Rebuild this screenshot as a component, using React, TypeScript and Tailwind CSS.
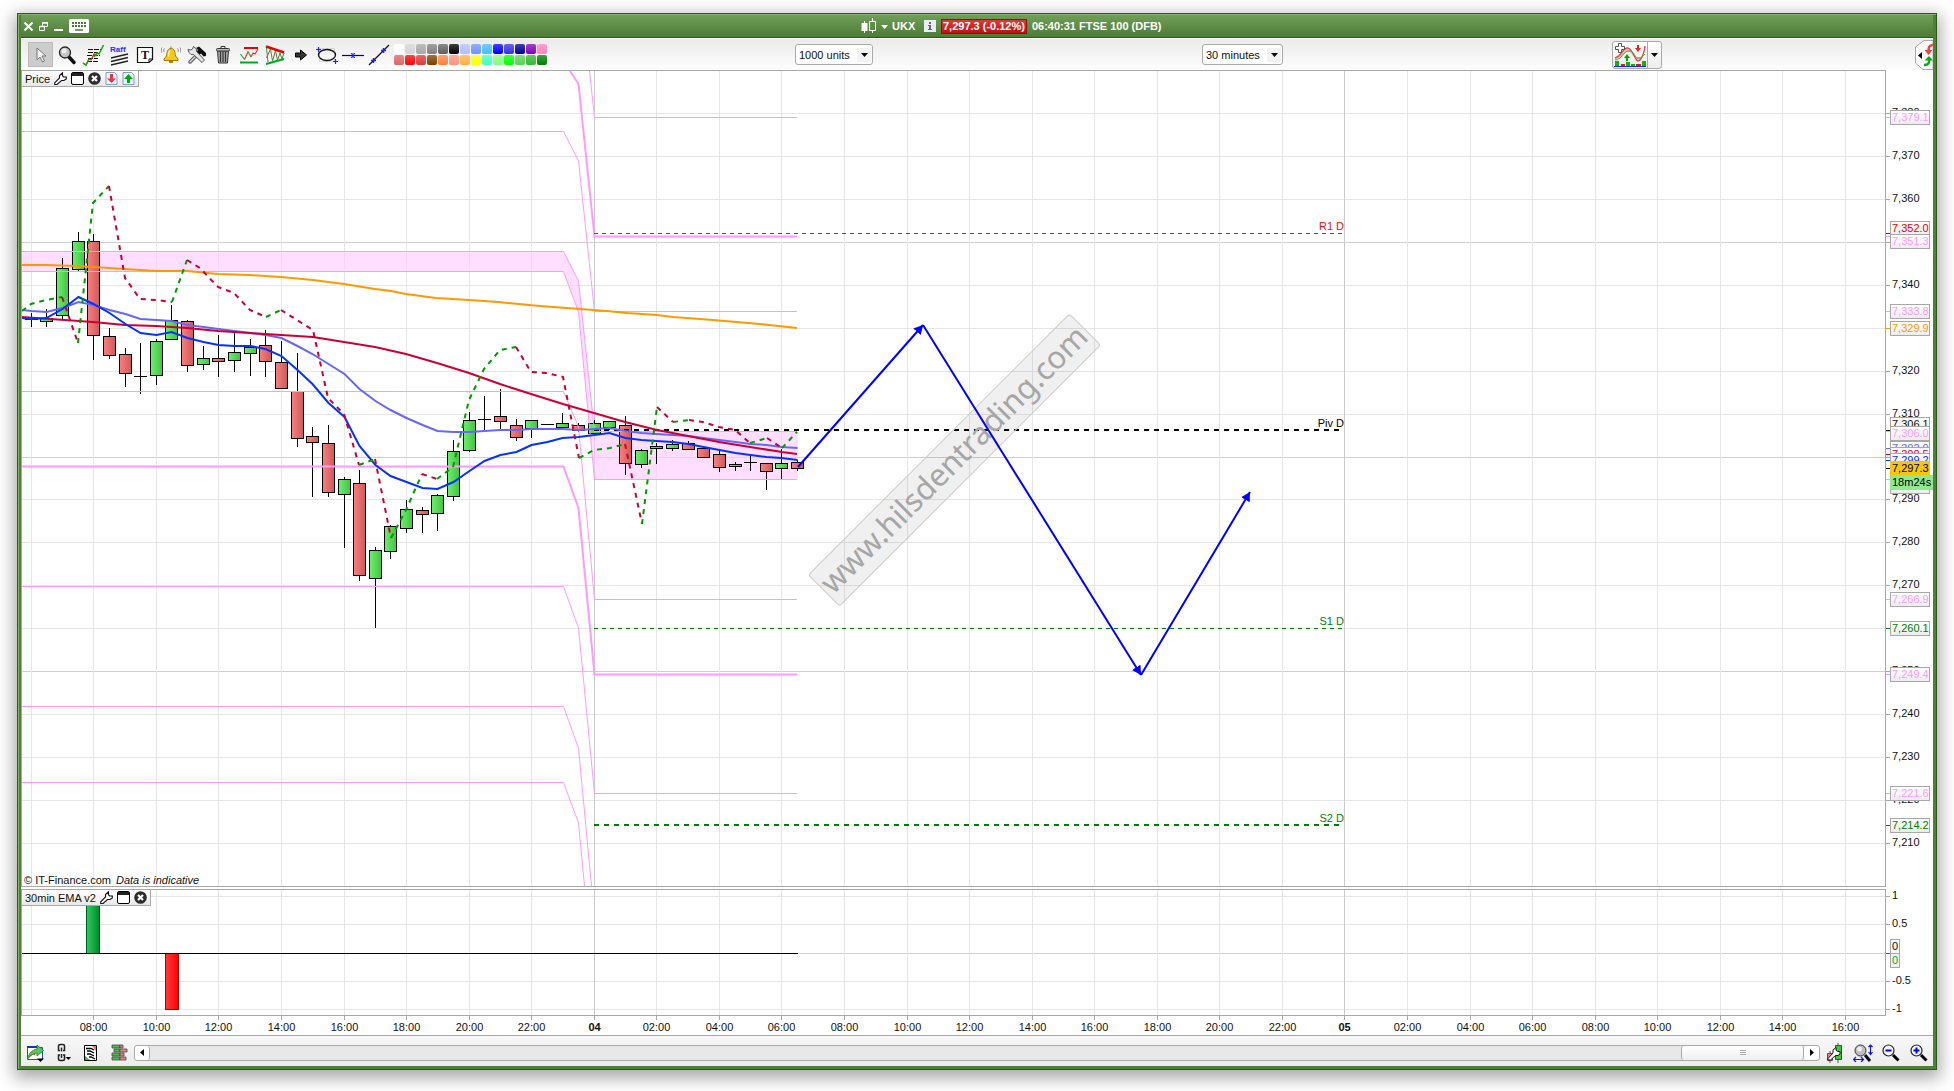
import type { ReactNode } from 'react';

const GRAY = '#a8a8a8';
const PINK = '#ff99ff';
const UP = '#009900';
const DOWN = '#cc0033';

// one bar every 30 minutes, bar 0 is 08:00
const xAt = (bar: number) => Math.floor(93.79 + bar * 15.64) + 0.5;
const yAt = (price: number) => Math.floor(113.5 + (7380 - price) * 4.294) + 0.5;

const prices = Array.from({ length: 18 }, (_, i) => 7380 - i * 10);
const hourBars = Array.from({ length: 30 }, (_, i) => -4 + i * 4);

// these levels lie wholly under a price tag
const coveredPrices = [7350, 7330, 7300, 7260];

const timeLabel = (bar: number) => {
  if (bar === 32) return '04';
  if (bar === 80) return '05';
  const hour = (8 + bar / 2) % 24;
  return `${String(hour).padStart(2, '0')}:00`;
};

// bar, high, low, body top, body bottom, u = up, d = down, x = doji
type Candle = [number, number, number, number, number, 'u' | 'd' | 'x'];

const candles: Candle[] = [
  [-4, 313, 327, 319, 319, 'x'],
  [-3, 309, 327, 318, 321, 'u'],
  [-2, 258, 319, 268, 315, 'u'],
  [-1, 232, 271, 241, 269, 'u'],
  [0, 234, 360, 241, 335, 'd'],
  [1, 328, 359, 336, 355, 'd'],
  [2, 348, 387, 354, 373, 'd'],
  [3, 343, 394, 376, 376, 'x'],
  [4, 339, 385, 341, 375, 'u'],
  [5, 305, 340, 320, 339, 'u'],
  [6, 320, 372, 321, 365, 'd'],
  [7, 346, 370, 358, 364, 'u'],
  [8, 335, 377, 358, 361, 'd'],
  [9, 333, 372, 352, 360, 'u'],
  [10, 339, 376, 347, 353, 'u'],
  [11, 330, 377, 345, 361, 'd'],
  [12, 341, 389, 362, 388, 'd'],
  [13, 353, 447, 391, 438, 'd'],
  [14, 427, 497, 436, 442, 'd'],
  [15, 425, 497, 443, 492, 'd'],
  [16, 477, 548, 479, 494, 'u'],
  [17, 470, 581, 483, 575, 'd'],
  [18, 547, 628, 550, 578, 'u'],
  [19, 525, 559, 526, 551, 'u'],
  [20, 500, 533, 509, 528, 'u'],
  [21, 507, 533, 510, 514, 'd'],
  [22, 494, 531, 495, 513, 'u'],
  [23, 440, 501, 451, 496, 'u'],
  [24, 412, 452, 420, 450, 'u'],
  [25, 396, 432, 419, 419, 'x'],
  [26, 389, 429, 416, 421, 'd'],
  [27, 419, 441, 425, 437, 'd'],
  [28, 420, 438, 420, 428, 'u'],
  [29, 424, 425, 424, 424, 'x'],
  [30, 413, 430, 423, 427, 'u'],
  [31, 423, 432, 425, 430, 'd'],
  [32, 420, 434, 423, 433, 'u'],
  [33, 421, 430, 421, 427, 'u'],
  [34, 416, 475, 425, 463, 'd'],
  [35, 449, 468, 450, 464, 'u'],
  [36, 443, 464, 446, 448, 'u'],
  [37, 440, 451, 444, 448, 'u'],
  [38, 441, 450, 443, 449, 'd'],
  [39, 447, 458, 448, 457, 'd'],
  [40, 449, 472, 454, 467, 'd'],
  [41, 462, 471, 464, 466, 'u'],
  [42, 455, 471, 462, 462, 'x'],
  [43, 463, 490, 463, 471, 'd'],
  [44, 449, 479, 463, 468, 'u'],
  [45, 460, 471, 462, 468, 'd'],
];

const fastAverage = [
  319, 318, 309, 297, 304, 313, 324, 333, 335, 332, 338, 342, 345, 346, 346, 349, 356, 370, 384, 403, 417, 446, 465,
  476, 482, 488, 489, 482, 471, 461, 455, 452, 445, 442, 438, 437, 435, 433, 438, 440, 441, 442, 444, 447, 450, 453,
  455, 457, 458, 460,
];
const mediumAverage = [
  311, 312, 308, 302, 305, 310, 314, 319, 320, 321, 325, 327, 329, 331, 333, 335, 338, 346, 354, 364, 374, 389, 401,
  410, 418, 425, 431, 432, 432, 431, 430, 430, 429, 429, 429, 430, 429, 428, 431, 433, 434, 435, 436, 438, 440, 442,
  444, 445, 447, 448,
];
const barLine = (start: number, values: number[]) =>
  [`21,${start}`, ...values.map((y, i) => `${xAt(i - 4)},${y}`)].join(' ');

const slowAverage =
  '21,317 93,322 125,325 156,326 187,328 218,331 250,333 281,335 313,337 344,342 375,347 406,354 437,363 469,373 500,384 531,394 563,404 594,413 625,422 657,430 688,436 719,442 750,447 782,452 797,454';
const longAverage =
  '21,265 46,265 78,266 93,267 109,268 140,270 156,271 187,271 218,274 250,275 281,277 313,280 344,284 375,289 391,291 406,294 436,298 469,300 498,302 540,306 580,309 607,311 627,313 657,315 673,317 713,320 760,324 797,328';

const trail: [string, string][] = [
  [UP, '22,311 31,304 46,300 62,297'],
  [DOWN, '62,297 78,343'],
  [UP, '78,343 93,203 109,186'],
  [DOWN, '109,186 125,278 140,299 156,300 172,302'],
  [UP, '172,302 187,260'],
  [DOWN, '187,260 200,268 218,287 234,293 250,310 266,317'],
  [UP, '266,317 281,310'],
  [DOWN, '281,310 297,320 313,330 328,398 344,414 359,465'],
  [UP, '359,465 375,459'],
  [DOWN, '375,459 391,538'],
  [UP, '391,538 406,510 422,474'],
  [DOWN, '422,474 437,479'],
  [UP, '437,479 453,467 469,400 484,369 500,350 516,347'],
  [DOWN, '516,347 531,372 547,373 563,377 579,458'],
  [UP, '579,458 594,450 610,448 625,444'],
  [DOWN, '625,444 642,524'],
  [UP, '642,524 657,407'],
  [DOWN, '657,407 673,422'],
  [UP, '673,422 689,420'],
  [DOWN, '689,420 703,422 719,427 735,430 750,443'],
  [UP, '750,443 767,438'],
  [DOWN, '767,438 782,448'],
  [UP, '782,448 797,432'],
];

const bands: [string, number][] = [
  ['570,71 578.5,84 594.5,236.5 797,236.5', 2],
  ['589.5,71 594.5,117.5 797,117.5', 1],
  ['21,131.5 563.5,131.5 578.5,161 594.5,311.5 797,311.5', 1],
  ['21,251.5 563.5,251.5 578.5,281 594.5,431.5 797,431.5', 1],
  ['21,271.5 563.5,271.5 578.5,312 594.5,479.5 797,479.5', 1],
  ['21,391.5 563.5,391.5 578.5,427 594.5,599.5 797,599.5', 1],
  ['21,466.5 563.5,466.5 578.5,508 594.5,674.5 797,674.5', 2],
  ['21,586.5 563.5,586.5 578.5,628 594.5,793.5 797,793.5', 1],
  ['21,706.5 563.5,706.5 578.5,748 591.5,886', 1],
  ['21,782.5 563.5,782.5 578.5,823 584.5,886', 1],
];

const pivots = [
  { label: 'R1 D', y: 233.5, color: '#dd1111', width: 1, dash: '4 4', text: '#ee1111' },
  { label: 'Piv D', y: 430, color: '#000000', width: 2, dash: '5 5', text: '#000000' },
  { label: 'S1 D', y: 628.5, color: '#008000', width: 1, dash: '4 4', text: '#008000' },
  { label: 'S2 D', y: 825, color: '#008000', width: 2, dash: '5 5', text: '#008000' },
];

const tags = [
  { text: '7,379.1', y: 110, tick: 117.5, color: PINK },
  { text: '7,352.0', y: 221, tick: 233.5, color: '#ee0000' },
  { text: '7,351.3', y: 234, tick: 236.5, color: PINK },
  { text: '7,333.8', y: 304, tick: 311.5, color: PINK },
  { text: '7,329.9', y: 321, tick: 328.5, color: '#ff9900' },
  { text: '7,306.1', y: 417, tick: 430.5, color: '#111111' },
  { text: '7,306.0', y: 426, tick: 431.5, color: PINK },
  { text: '7,302.0', y: 441, tick: 448.5, color: '#6666ff' },
  { text: '7,300.5', y: 447, tick: 454.5, color: DOWN },
  { text: '7,299.2', y: 453, tick: 460.5, color: '#0433ff' },
  { text: '', y: 479, tick: 479.5, color: PINK },
  { text: '7,266.9', y: 592, tick: 599.5, color: PINK },
  { text: '7,260.1', y: 621, tick: 628.5, color: '#008000' },
  { text: '7,249.4', y: 667, tick: 674.5, color: PINK },
  { text: '7,221.6', y: 786, tick: 793.5, color: PINK },
  { text: '7,214.2', y: 818, tick: 825.5, color: '#008000' },
];

const palette = [
  ['#ffffff', '#d4d4d4', '#a8a8a8', '#808080', '#606060', '#000000', '#b4bcff', '#6f92ff', '#40bfff', '#0000ff', '#3333dd', '#000099', '#8800bb', '#ff80c0'],
  ['#dd6666', '#ff0000', '#e03838', '#804000', '#ff8040', '#ff9080', '#ffb040', '#ffff00', '#40ffc0', '#80ff80', '#00ff00', '#50d850', '#30b830', '#008000'],
];

const lowerLevels = [
  { label: '1', y: 896.5 },
  { label: '0.5', y: 924.5 },
  { label: '', y: 953.5 },
  { label: '-0.5', y: 981.5 },
  { label: '-1', y: 1009.5 },
];

function Glyph({ w = 20, h = 20, children }: { w?: number; h?: number; children: ReactNode }) {
  return (
    <svg width={w} height={h} viewBox={`0 0 ${w} ${h}`} fill="none" aria-hidden="true">
      {children}
    </svg>
  );
}

const Wrench = () => (
  <Glyph w={13} h={13}>
    <path d="M.7 10.800 5.500 6V3.500L8.500.8v3l1.200 1.200h2.600v2L10 8.500H7.500L3 12.500H.7z" fill="#fff" stroke="#111" strokeWidth="1.100" />
  </Glyph>
);

const Maximise = () => (
  <Glyph w={13} h={13}>
    <rect x="0.500" y="0.500" width="12" height="12" rx="1.500" fill="#fff" stroke="#000" />
    <path d="M1 1h11v3H1z" fill="#222" />
  </Glyph>
);

const Close = () => (
  <Glyph w={13} h={13}>
    <circle cx="6.500" cy="6.500" r="6.300" fill="#2d2d2d" />
    <path d="m4 4 5 5M9 4 4 9" stroke="#fff" strokeWidth="2.200" />
  </Glyph>
);

const SheetArrow = ({ up }: { up?: boolean }) => (
  <Glyph w={13} h={13}>
    <path d="M1 .5h8.500L12 3v9.500H1z" fill="#eef4fc" stroke="#7f9fc4" />
    {up ? (
      <path d="M6.500 2 11 7H8v4H5V7H2z" fill="#00aa11" />
    ) : (
      <path d="M6.500 11 11 6.500H8V2H5v4.500H2z" fill="#ee3344" />
    )}
  </Glyph>
);

const tools: { name: string; icon: ReactNode }[] = [
  {
    name: 'Select',
    icon: (
      <Glyph>
        <path d="M6 3v12l3-3 2.500 5 2-1-2.500-5h4z" fill="#f4f4f4" stroke="#777" />
      </Glyph>
    ),
  },
  {
    name: 'Zoom',
    icon: (
      <Glyph>
        <path d="m12 12 5 5.500" stroke="#111" strokeWidth="3.500" strokeLinecap="round" />
        <circle cx="8" cy="7.500" r="5.500" fill="#c4c4c4" stroke="#222" strokeWidth="1.300" />
        <circle cx="7" cy="6" r="2.500" fill="#eee" />
      </Glyph>
    ),
  },
  {
    name: 'Order levels',
    icon: (
      <Glyph w={22} h={22}>
        <path d="M6 5.500h13M6 8.500h10M5 11.500h13M6 14.500h10M5 17.500h11" stroke="#111" strokeDasharray="5 1" />
        <path d="m1 19 3 2 3-6 2 1 3-6 3 2" stroke="#e22" strokeWidth="1.200" />
        <path d="m1 19 3 2 3-6M12 13l3-4 2 1 4.500-9" stroke="#1a1" strokeWidth="1.500" />
      </Glyph>
    ),
  },
  {
    name: 'Raff channel',
    icon: (
      <Glyph w={20} h={22}>
        <text x="1" y="8" fontSize="8" fontFamily="Liberation Sans, sans-serif" fontWeight="bold" fill="#2233ff">
          Raff
        </text>
        <path d="m2 14 17-4M2 17.500l17-4M2 21l17-4" stroke="#222" strokeWidth="1.300" />
      </Glyph>
    ),
  },
  {
    name: 'Text',
    icon: (
      <Glyph>
        <path d="M2.500 2.500h15v12L14 17.500H2.500z" fill="#fff" stroke="#111" strokeWidth="1.200" />
        <path d="M14 17.500v-3.500h3.500" stroke="#111" />
        <text x="10" y="14" fontSize="12" textAnchor="middle" fontFamily="Liberation Serif, serif" fontWeight="bold" fill="#111">
          T
        </text>
      </Glyph>
    ),
  },
  {
    name: 'Alert',
    icon: (
      <Glyph>
        <path d="M10 3.500c-4 0-4 4.500-4.500 7.500L3 14v1.500h14V14l-2.500-3C14 8 14 3.500 10 3.500z" fill="#f7c81c" stroke="#a77b00" />
        <path d="M10 1.500v2M8.500 16h3v1.500h-3z" fill="#d09a00" stroke="#a77b00" />
        <path d="M8.500 5.500c-1 2-1 4-1 6" stroke="#fff3a0" strokeWidth="1.500" />
        <path d="M3.500 3.500C2.500 4.500 2.500 6 3 7M1 2.500C0 4 0 6 .5 7.500M16.500 3.500c1 1 1 2.500.5 3.500M19 2.500c1 1.500 1 3.500.5 5" stroke="#888" />
      </Glyph>
    ),
  },
  {
    name: 'Tools',
    icon: (
      <Glyph>
        <path d="m3 17 8-8" stroke="#555" strokeWidth="3.500" strokeLinecap="round" />
        <path d="m3 17 8-8" stroke="#ddd" strokeWidth="1.500" strokeLinecap="round" />
        <path d="m9 3 3-1.500 7 6.500v3l-2.500.5-2.500-3-2 2-3-3 2-2.500z" fill="#111" />
        <path d="m6.500 9.500 8.500 8 2.500-2.500-8-8.500V4L6.500 1.500 5.500 4 3.500 5 1 4.500 2 7.500l2 2z" fill="#e5e5e5" stroke="#555" />
      </Glyph>
    ),
  },
  {
    name: 'Delete',
    icon: (
      <Glyph>
        <path d="M4.500 6h11l-1 12h-9z" fill="#aaa" stroke="#333" />
        <path d="M7.500 7v10M10 7v10M12.500 7v10" stroke="#333" strokeWidth="1.200" />
        <rect x="3.500" y="3.500" width="13" height="2.500" rx="1" fill="#bbb" stroke="#333" />
        <path d="M8 3V1.500h4V3" stroke="#333" />
      </Glyph>
    ),
  },
  {
    name: 'Support and resistance',
    icon: (
      <Glyph>
        <path d="M5 3h14" stroke="#f00000" strokeWidth="2" />
        <path d="M1 17.500h18" stroke="#00aa22" strokeWidth="2" />
        <path d="m1.500 9 4 5.500M9 6.500l3 5.500" stroke="#1a4" strokeWidth="1.200" />
        <path d="m5.500 14.500 3.500-8M12 12l2-4 2 1 3-5" stroke="#e33" strokeWidth="1.200" />
      </Glyph>
    ),
  },
  {
    name: 'Trend channel',
    icon: (
      <Glyph>
        <path d="m1 1.500 18 6" stroke="#f00000" strokeWidth="2.500" />
        <path d="m1 19 18-5" stroke="#00aa22" strokeWidth="2" />
        <path d="m1.500 13 4-9M7.500 16l3-10M12.500 15l2.500-7" stroke="#d33" />
        <path d="m1.500 3 1.500 14M5.500 4l2 12M10.500 6l2 9M15 8l2 6 2-6" stroke="#1a4" />
      </Glyph>
    ),
  },
  {
    name: 'Arrow',
    icon: (
      <Glyph>
        <path d="M4.500 8h5V5l6 5-6 5v-3h-5z" fill="#333" stroke="#000" />
      </Glyph>
    ),
  },
  {
    name: 'Ellipse',
    icon: (
      <Glyph w={22}>
        <rect x="3.500" y="3.500" width="15" height="13" stroke="#bbb" strokeDasharray="1 1" />
        <ellipse cx="11" cy="10" rx="8.500" ry="5.500" stroke="#111" strokeWidth="1.300" />
        <path d="M0 4.500h5M2.500 2v5M17 16.500h5M19.500 14v5" stroke="#2222ee" strokeWidth="1.200" />
      </Glyph>
    ),
  },
  {
    name: 'Horizontal line',
    icon: (
      <Glyph w={22}>
        <path d="M0 10.500h22" stroke="#111" strokeWidth="1.200" />
        <path d="m9 8 4 5M13 8l-4 5M11 8v5" stroke="#22e" />
      </Glyph>
    ),
  },
  {
    name: 'Trend line',
    icon: (
      <Glyph w={22} h={22}>
        <path d="M1 21 21 1" stroke="#111" strokeWidth="1.200" />
        <path d="M3 16.500h5M5.500 14v5M13 6.500h5M15.500 4v5" stroke="#22e" strokeWidth="1.500" />
      </Glyph>
    ),
  },
];

function TitleBar() {
  return (
    <header className="grid h-[23px] shrink-0 grid-cols-[840fr_1072fr] items-center border-b border-[#2c5a1a] bg-linear-to-b from-[#6f9f58] to-[#4c7c35] text-white">
      <div className="flex items-center gap-[6px] pl-[3px]">
        <button aria-label="Close window">
          <Glyph w={9} h={9}>
            <path d="m.5.5 8 8M8.500.5l-8 8" stroke="#fff" strokeWidth="2" />
          </Glyph>
        </button>
        <button aria-label="Restore window">
          <Glyph w={9} h={9}>
            <path d="M3.500.5h5v4h-5zM.5 4.500h5v4h-5z" stroke="#fff" />
            <path d="M3 1h6M0 4.500h6" stroke="#fff" strokeWidth="1.500" />
          </Glyph>
        </button>
        <button aria-label="Minimise window">
          <Glyph w={9} h={9}>
            <path d="M0 8h9" stroke="#fff" strokeWidth="2" />
          </Glyph>
        </button>
        <button aria-label="Keyboard">
          <Glyph w={20} h={14}>
            <rect width="20" height="14" rx="1.500" fill="#fff" />
            <path d="M3 4h14M3 7h14" stroke="#4b7a35" strokeWidth="2" strokeDasharray="2 1" />
            <path d="M6 11h8" stroke="#4b7a35" strokeWidth="1.500" />
          </Glyph>
        </button>
      </div>
      <div className="flex items-center text-[11px] font-bold leading-3 whitespace-nowrap">
        <button aria-label="Choose instrument" className="mr-1 flex items-center">
          <Glyph w={27} h={16}>
            <path d="M3.500 3v12M11.500 0v3M11.500 13v2" stroke="#fff" />
            <path d="M.5 5h6v8h-6z" fill="#fff" />
            <path d="M8.500 3.500h6v9h-6z" stroke="#fff" />
            <path d="M20 7h7l-3.500 4z" fill="#fff" />
          </Glyph>
        </button>
        <span className="w-8">UKX</span>
        <button aria-label="Instrument details" className="mr-[5px]">
          <Glyph w={12} h={12}>
            <path d="M0 0h12v12H0z" fill="#e9edf5" />
            <path d="M5 2h2v2H5zM4 5h3v4h1v1H4V9h1V6H4z" fill="#667" />
          </Glyph>
        </button>
        <span className="border border-[#8e1111] bg-linear-to-b from-[#e23838] to-[#bb1111] px-px leading-[13px]">7,297.3 (-0.12%)</span>
        <span className="ml-[5px]">06:40:31 FTSE 100 (DFB)</span>
      </div>
    </header>
  );
}

function Picker({ label, options, width }: { label: string; options: string[]; width: string }) {
  return (
    <div className={`relative ${width}`}>
      <select
        aria-label={label}
        className="block h-[21px] w-full appearance-none rounded-[3px] border border-[#aaa] bg-white pl-[3px] text-[11px] leading-4 text-[#111]"
      >
        {options.map((option) => (
          <option key={option}>{option}</option>
        ))}
      </select>
      <span className="pointer-events-none absolute top-1 right-[2px] flex h-[14px] w-[14px] items-center justify-center bg-[#f2f2f2]">
        <Glyph w={7} h={4}>
          <path d="M0 0h7L3.500 4z" fill="#000" />
        </Glyph>
      </span>
    </div>
  );
}

function Toolbar() {
  return (
    <div className="grid h-8 shrink-0 grid-cols-[774fr_407fr_410fr_321fr] items-center border-t border-white bg-linear-to-b from-[#ebebeb] to-[#fdfdfd]">
      <div className="flex items-center gap-[3px] pl-[7px]">
        <div className="flex shrink-0 gap-px">
          {tools.map((tool, i) => (
            <button
              key={tool.name}
              aria-label={tool.name}
              className={`flex h-[25px] w-[25px] items-center justify-center ${i === 0 ? 'border border-[#bbb] bg-[#cccccc]' : ''}`}
            >
              {tool.icon}
            </button>
          ))}
        </div>
        <div className="flex shrink-0 flex-col gap-px">
          {palette.map((row, r) => (
            <div key={r} className="flex gap-px">
              {row.map((color) => (
                <button
                  key={color}
                  aria-label={`Colour ${color}`}
                  className="h-[10px] w-[10px] rounded-[2px] bg-linear-to-b from-white/25 to-transparent"
                  style={{ backgroundColor: color }}
                />
              ))}
            </div>
          ))}
        </div>
      </div>
      <Picker label="Number of units" options={['1000 units', '2000 units']} width="w-[78px]" />
      <Picker label="Time frame" options={['30 minutes', '1 hour']} width="w-[81px]" />
      <div className="flex items-center justify-between">
        <div className="flex h-7 w-[50px] rounded-[3px] border border-[#aaa] bg-linear-to-b from-white to-[#ededed]">
          <button aria-label="Indicators" className="flex flex-1 items-center justify-center">
            <Glyph w={32} h={24}>
              <path d="M1 15C8 13 9 4 14 5s7 13 10 13 6-7 7-15c0 10-4 12-8 12s-6-7-9-7-6 9-13 8z" fill="#f0b8b0" />
              <path d="M1 15C8 13 9 4 14 5s7 13 10 13 6-7 7-15" stroke="#e33" strokeWidth="1.200" />
              <path d="M1 17c7 0 8-9 14-9s5 7 9 7 5-2 7-4" stroke="#3a4" />
              <path d="M1 23v-5h4v5zM12 23v-4h4v4zM17 23v-2h4v2zM28 23v-5h4v5z" fill="#0b0" />
              <path d="M7 23v-2h4v2zM22 23v-2h5v2z" fill="#c22" />
              <path d="M0 23.500h32" stroke="#22e" />
              <path d="m13 11 3 4h-2v3h-2v-3h-2z" fill="#0a0" />
              <path d="m24 9 3-4h-2V2h-2v3h-2z" fill="#e22" />
              <path d="M4.500.5h3v3h3v3h-3v3h-3v-3h-3v-3h3z" fill="#fff" stroke="#555" />
            </Glyph>
          </button>
          <button aria-label="More indicators" className="flex w-[14px] items-center justify-center border-l border-[#aaa]">
            <Glyph w={7} h={4}>
              <path d="M0 0h7L3.500 4z" fill="#000" />
            </Glyph>
          </button>
        </div>
        <button aria-label="Open trading panel">
          <Glyph w={18} h={30}>
            <path d="M18 .5H9L.5 7v16L8 29.500h10z" fill="#fff" stroke="#aaa" />
            <path d="M7 12v7l-4-3.500z" fill="#000" />
            <path d="M18 5c-4 0-5 3-4 6" stroke="#e44" strokeWidth="2.500" />
            <path d="M9.500 10h8l-4 5z" fill="#e44" />
            <path d="M9 25c5 0 5.500-3 5-5" stroke="#1a1" strokeWidth="2.500" />
            <path d="M9.500 20.500h8.500L14 16z" fill="#1a1" />
          </Glyph>
        </button>
      </div>
    </div>
  );
}

function PanelTab({ title, children }: { title: string; children: ReactNode }) {
  return (
    <div className="absolute top-0 left-0 flex h-4 items-center gap-1 border-r border-b border-[#a8a8a8] bg-linear-to-b from-white to-[#e8e8e8] pr-[3px] pl-[3px] text-[11px] leading-4 text-[#111]">
      <span className="whitespace-nowrap">{title}</span>
      {children}
    </div>
  );
}

function TabButtons() {
  return (
    <>
      <button aria-label="Settings">
        <Wrench />
      </button>
      <button aria-label="Maximise panel">
        <Maximise />
      </button>
      <button aria-label="Close panel">
        <Close />
      </button>
    </>
  );
}

function TimeGrid({ from, to }: { from: number; to: number }) {
  return (
    <>
      {hourBars.map((bar) => (
        <path key={bar} d={`M${xAt(bar)} ${from}V${to}`} stroke={bar === 32 || bar === 80 ? '#cacaca' : '#e6e6e6'} />
      ))}
    </>
  );
}

function PricePlot() {
  return (
    <svg className="absolute inset-0 h-full w-full" role="img" aria-label="FTSE 100 price chart">
      <defs>
        <linearGradient id="up">
          <stop offset="0" stopColor="#6cf06c" />
          <stop offset="1" stopColor="#44c244" />
        </linearGradient>
        <linearGradient id="down">
          <stop offset="0" stopColor="#f88080" />
          <stop offset="1" stopColor="#d05858" />
        </linearGradient>
        <marker id="head" markerUnits="userSpaceOnUse" markerWidth="12" markerHeight="12" refX="9" refY="5" orient="auto">
          <path d="M0 0 9 5 0 10z" fill="#0000ff" />
        </marker>
      </defs>
      <g transform="translate(-22 -71)" fill="none">
        {prices.map((price) => (
          <path key={price} d={`M0 ${yAt(price)}H4000`} stroke={price % 50 === 0 ? '#cfcfcf' : '#e6e6e6'} />
        ))}
        <TimeGrid from={0} to={2000} />

        {/* zones and bands */}
        <path d="M21 251.500H563.500L578.500 281 594.500 431.500V479.500L578.500 312 563.500 271.500H21z" fill="#ffccff" fillOpacity="0.650" />
        <path d="M594.500 431.500H798V479.500H594.500z" fill="#ffccff" fillOpacity="0.650" />

        {candles.map(([bar, high, low, top, bottom, kind]) => {
          const x = xAt(bar);
          return (
            <g key={bar} stroke="#000">
              <path d={`M${x} ${high}V${low}`} />
              {kind === 'x' ? (
                <path d={`M${x - 6.5} ${top + 0.5}H${x + 6.5}`} />
              ) : (
                <rect x={x - 6} y={top + 0.5} width="12" height={bottom - top} fill={kind === 'u' ? 'url(#up)' : 'url(#down)'} />
              )}
            </g>
          );
        })}

        {bands.map(([points, width]) => (
          <polyline key={points} points={points} stroke={PINK} strokeWidth={width} />
        ))}

        {pivots.map((pivot) => (
          <g key={pivot.label}>
            <path d={`M594 ${pivot.y}H1344`} stroke={pivot.color} strokeWidth={pivot.width} strokeDasharray={pivot.dash} />
            <text x="1344" y={Math.floor(pivot.y) - 3} textAnchor="end" fontSize="11" fill={pivot.text}>
              {pivot.label}
            </text>
          </g>
        ))}

        <polyline points={longAverage} stroke="#ff9900" strokeWidth="2" />
        <polyline points={barLine(310, mediumAverage)} stroke="#6666ff" strokeWidth="2" />
        <polyline points={slowAverage} stroke={DOWN} strokeWidth="2" />
        <polyline points={barLine(318, fastAverage)} stroke="#0433ff" strokeWidth="2" />
        {trail.map(([color, points]) => (
          <polyline key={points} points={points} stroke={color} strokeWidth="2" strokeDasharray="5 5" />
        ))}

        {/* watermark */}
        <g transform="rotate(-45 954.500 460)">
          <rect x="770" y="438" width="369" height="44" rx="3" fill="#000" fillOpacity="0.060" stroke="#ccc" />
          <text x="954.500" y="470" textAnchor="middle" fontSize="31" className="font-['Noto_Sans',sans-serif]" fill="#a6a6a6">
            www.hilsdentrading.com
          </text>
        </g>

        {['M798 467 923 325', 'M923 325 1141 675', 'M1141 675 1250 492'].map((d) => (
          <path key={d} d={d} stroke="#0000ff" strokeWidth="2" markerEnd="url(#head)" />
        ))}
      </g>
    </svg>
  );
}

function PriceAxis() {
  return (
    <svg className="w-[47px] shrink-0 self-stretch" aria-label="Price axis">
      <defs>
        <linearGradient id="tag" x2="0" y2="1">
          <stop offset="0" stopColor="#ffffff" />
          <stop offset="1" stopColor="#ececec" />
        </linearGradient>
      </defs>
      <g transform="translate(-1886 -70)" fontSize="11">
        {prices.map((price) => (
          <g key={price}>
            <path d={`M1886 ${yAt(price)}h4`} stroke={GRAY} />
            {!coveredPrices.includes(price) && (
              <text x="1892" y={Math.floor(yAt(price)) + 3} fill="#111">
                {price.toLocaleString('en-US')}
              </text>
            )}
          </g>
        ))}
        {tags.map((tag) => (
          <g key={tag.y}>
            <path d={`M1886 ${tag.tick}h4`} stroke={tag.color} />
            <rect x="1890.500" y={tag.y + 0.5} width="39" height="14" fill="url(#tag)" stroke={GRAY} />
            {tag.text && (
              <text x="1892" y={tag.y + 11} fill={tag.color}>
                {tag.text}
              </text>
            )}
          </g>
        ))}
        <path d="M1886 468.500h4" stroke="#000" />
        <rect x="1890" y="461" width="40" height="15" fill="#f5c60e" />
        <text x="1892" y="472" fill="#000">
          7,297.3
        </text>
        <rect x="1890" y="475" width="43" height="15" fill="#8eea8e" />
        <text x="1892" y="486" fill="#000">
          18m24s
        </text>
      </g>
    </svg>
  );
}

function IndicatorPanel() {
  return (
    <section className="mt-[2px] flex h-[127px] shrink-0">
      <div className="relative min-w-0 flex-1 overflow-hidden border border-[#a8a8a8]">
        <svg className="absolute inset-0 h-full w-full" role="img" aria-label="30 minute EMA signals">
          <defs>
            <linearGradient id="buy">
              <stop offset="0" stopColor="#2ecc62" />
              <stop offset="1" stopColor="#008a2a" />
            </linearGradient>
            <linearGradient id="sell">
              <stop offset="0" stopColor="#ff3b3b" />
              <stop offset="1" stopColor="#ff0000" />
            </linearGradient>
          </defs>
          <g transform="translate(-22 -890)">
            {lowerLevels.map(({ y }) => (
              <path key={y} d={`M0 ${y}H4000`} stroke={y === 953.5 ? '#cfcfcf' : '#e6e6e6'} />
            ))}
            <TimeGrid from={880} to={1020} />
            <rect x="86.500" y="896.500" width="13" height="57" fill="url(#buy)" stroke="#005a1a" />
            <rect x="165.500" y="953.500" width="13" height="56" fill="url(#sell)" stroke="#b00000" />
            <path d="M21 953.500H798" stroke="#000" />
          </g>
        </svg>
        <PanelTab title="30min EMA v2">
          <TabButtons />
        </PanelTab>
      </div>
      <svg className="w-[47px] shrink-0 self-stretch" aria-label="Indicator axis">
        <g transform="translate(-1886 -889)" fontSize="11">
          {lowerLevels.map(({ y, label }) => (
            <g key={y}>
              <path d={`M1886 ${y}h4`} stroke={label ? GRAY : '#009933'} />
              <text x="1892" y={y + 2.5} fill="#111">
                {label}
              </text>
            </g>
          ))}
          <rect x="1890.500" y="939.500" width="9" height="14" fill="#f6f6f6" stroke={GRAY} />
          <rect x="1890.500" y="953.500" width="9" height="14" fill="#f0f0f0" stroke={GRAY} />
          <text x="1892" y="950" fill="#111">
            0
          </text>
          <text x="1892" y="964" fill="#00aa33">
            0
          </text>
        </g>
      </svg>
    </section>
  );
}

function TimeAxis() {
  return (
    <svg className="h-5 w-full shrink-0 border-b border-[#a8a8a8]" aria-label="Time axis">
      <g transform="translate(-21 -1016)" fontSize="11" textAnchor="middle" fill="#111">
        {hourBars.slice(1).map((bar) => (
          <g key={bar}>
            <path d={`M${xAt(bar)} 1016v4`} stroke={GRAY} />
            <text x={xAt(bar)} y="1031" fontWeight={bar === 32 || bar === 80 ? 'bold' : 'normal'}>
              {timeLabel(bar)}
            </text>
          </g>
        ))}
      </g>
    </svg>
  );
}

const Lens = ({ children }: { children: ReactNode }) => (
  <Glyph w={18} h={18}>
    <path d="m11 11 5.500 5.500" stroke="#000" strokeWidth="3" />
    <circle cx="6.500" cy="6.500" r="5.500" fill="#f4f4f4" stroke="#222" strokeWidth="1.200" />
    {children}
  </Glyph>
);

function BottomBar() {
  return (
    <footer className="flex h-[30px] shrink-0 items-center bg-linear-to-b from-[#f8f8f8] to-[#ececec] pt-[3px] pr-[5px] pl-[5px]">
      <div className="flex w-[108px] shrink-0 items-center justify-between pr-[6px]">
        <button aria-label="Export chart">
          <Glyph w={18} h={18}>
            <path d="M1.500 3.500h15v12h-15z" fill="#fff" stroke="#2a50c0" />
            <path d="M1 3h11" stroke="#1238b8" strokeWidth="2" />
            <path d="m4 12 3-3 2 2" stroke="#e33" strokeWidth="1.500" />
            <path d="M1.500 15C3 9 6 6 11 5V1l6.500 5.500L11 12V9c-3 0-6 2-9.500 6z" fill="#5cc85c" stroke="#197a19" strokeWidth="0.800" />
            <path d="M11 14.500h7l-3.500 3.500z" fill="#000" />
          </Glyph>
        </button>
        <button aria-label="Link charts">
          <Glyph w={14} h={19}>
            <path d="M3 7.500H1.500V3q0-1.500 2-1.500h2q2 0 2 1.500v4.500H6M3 12H1.500v4q0 1.500 2 1.500h2q2 0 2-1.500v-4H6M4.500 4.500v4M4.500 11v4" stroke="#222" strokeWidth="1.500" />
            <path d="M8.500 14H14l-2.500 3z" fill="#000" />
          </Glyph>
        </button>
        <button aria-label="Order list">
          <Glyph w={14} h={16}>
            <path d="M.5.5h12v15H.5z" fill="#fff" stroke="#000" />
            <path d="M8 1h4v5z" fill="#e77" />
            <path d="M1 11v4h5z" fill="#3b3" />
            <path d="M2 3.500h5l3 1.500M3 6h3l4 2M3 9h3l4 2M5 12h2l4 2" stroke="#000" strokeWidth="1.300" />
          </Glyph>
        </button>
        <button aria-label="Market depth">
          <Glyph w={17} h={17}>
            <path d="M1 1h8v3H1zM3 5h6v3H3zM1 9h8v3H1zM1 13h8v3H1z" fill="#3fc53f" stroke="#444" strokeWidth="0.800" />
            <path d="M9 1h3v3H9zM9 5h7v3H9zM9 9h4v3H9zM9 13h6v3H9z" fill="#f08080" stroke="#444" strokeWidth="0.800" />
          </Glyph>
        </button>
      </div>
      <div className="flex h-4 min-w-0 flex-1 rounded-[3px] border border-[#aaa] bg-[#e8e8e8]">
        <button aria-label="Scroll left" className="flex w-[15px] items-center justify-center rounded-[3px] border-r border-[#aaa] bg-white">
          <Glyph w={4} h={7}>
            <path d="M4 0v7L0 3.500z" fill="#000" />
          </Glyph>
        </button>
        <div className="flex flex-1 justify-end">
          <button aria-label="Scroll position" className="flex w-[123px] items-center justify-center rounded-[3px] border-x border-[#aaa] bg-linear-to-b from-white to-[#efefef]">
            <Glyph w={6} h={5}>
              <path d="M0 .5h6M0 2.500h6M0 4.500h6" stroke="#aaa" />
            </Glyph>
          </button>
        </div>
        <button aria-label="Scroll right" className="flex w-[15px] items-center justify-center rounded-[3px] bg-white">
          <Glyph w={4} h={7}>
            <path d="M0 0v7l4-3.500z" fill="#000" />
          </Glyph>
        </button>
      </div>
      <div className="flex w-[108px] shrink-0 items-center justify-between pl-[6px]">
        <button aria-label="Chart settings">
          <Glyph w={17} h={20}>
            <path d="M4 8v12M12 0v20" stroke="#555" />
            <path d="M1.500 10.500h5v7h-5z" fill="#e98080" stroke="#744" />
            <path d="M9.500 2.500h6v14h-6z" fill="#3fc53f" stroke="#255" />
            <path d="m2 15.500 5-5.500V7l3-2.500V7l1.500 1.500H14V11l-2 1.500H9.500L4.500 17H2z" fill="#fff" stroke="#111" />
          </Glyph>
        </button>
        <button aria-label="Reset zoom">
          <Glyph w={20} h={18}>
            <path d="m12 11 5 6" stroke="#000" strokeWidth="3" />
            <circle cx="7.500" cy="6.500" r="5.500" fill="#bdbdbd" stroke="#333" />
            <circle cx="6.500" cy="5" r="2.500" fill="#eee" />
            <path d="M1 15.500h9M3 13l-2.500 2.500L3 18M8 13l2.500 2.500L8 18M17.500 1v9M15.500 3l2-2 2 2M15.500 8l2 2.500 2-2.500" stroke="#11e" strokeWidth="1.200" />
          </Glyph>
        </button>
        <button aria-label="Zoom out">
          <Lens>
            <path d="M3.500 6.500h6" stroke="#00f" strokeWidth="2" />
          </Lens>
        </button>
        <button aria-label="Zoom in">
          <Lens>
            <path d="M3.500 6.500h6M6.500 3.500v6" stroke="#00f" strokeWidth="2" />
          </Lens>
        </button>
      </div>
    </footer>
  );
}

export default function App() {
  return (
    <div className="flex h-screen min-h-[600px] bg-white px-[17px] pt-[13px] pb-[21px] font-['Liberation_Sans',Arial,sans-serif]">
      <main className="flex min-w-0 flex-1 flex-col border border-[#2c5a1a] bg-[#4f8038] shadow-[0_5px_16px_3px_rgba(0,0,0,0.35)]">
        <div className="flex min-h-0 flex-1 flex-col border-t border-l border-[#86b06e] pr-[3px] pb-[3px] pl-[2px]">
          <TitleBar />
          <Toolbar />
          <div className="flex min-h-0 flex-1 flex-col bg-white">
            <section className="flex min-h-0 flex-1">
              <div className="relative min-w-0 flex-1 overflow-hidden border border-[#a8a8a8]">
                <PricePlot />
                <PanelTab title="Price">
                  <TabButtons />
                  <button aria-label="Move panel down">
                    <SheetArrow />
                  </button>
                  <button aria-label="Move panel up">
                    <SheetArrow up />
                  </button>
                </PanelTab>
                <p className="absolute bottom-0 left-[2px] flex gap-[5px] text-[11px] leading-3 text-[#111]">
                  <span>© IT-Finance.com</span>
                  <em>Data is indicative</em>
                </p>
              </div>
              <PriceAxis />
            </section>
            <IndicatorPanel />
            <TimeAxis />
          </div>
          <BottomBar />
        </div>
      </main>
    </div>
  );
}
